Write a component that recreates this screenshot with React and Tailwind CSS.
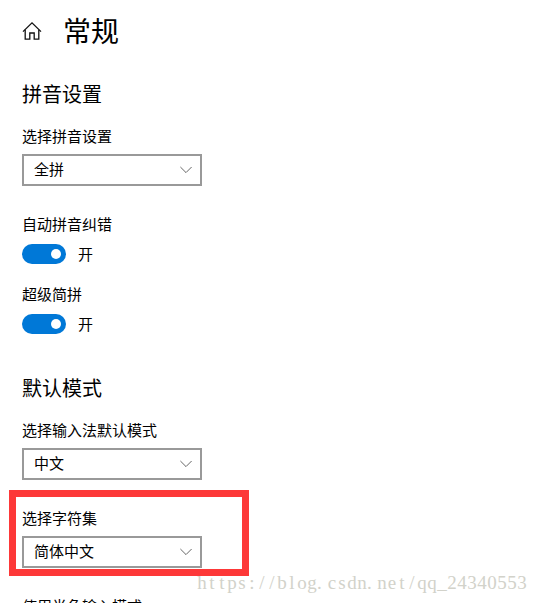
import React, { useState } from 'react'

const SelectField = ({ label, value, className }) => {
  return (
    <div className={className}>
      <div className="h-5 text-[15px] leading-5">{label}</div>
      <button className="mt-2 flex h-8 w-[180px] items-center justify-between border-2 border-[#999999] bg-white pr-2 pl-2.5 text-[15px] leading-5">
        <span className="pb-0.5">{value}</span>
        <svg width="12" height="8" viewBox="0 0 12 8" fill="none" stroke="#666666" strokeWidth="1">
          <path d="M0.4 1 L6 6.6 L11.6 1" />
        </svg>
      </button>
    </div>
  )
}

const ToggleField = ({ label, className }) => {
  const [on, setOn] = useState(true)

  return (
    <div className={className}>
      <div className="h-5 text-[15px] leading-5">{label}</div>
      <div className="mt-2.5 flex h-5 items-center gap-3">
        <button
          onClick={() => setOn(!on)}
          className={`flex h-5 w-11 items-center rounded-full px-[5px] ${on ? 'justify-end bg-[#0078d7]' : 'justify-start bg-[#999999]'}`}
        >
          <span className="h-2.5 w-2.5 rounded-full bg-white"></span>
        </button>
        <span className="text-[15px] leading-5">{on ? '开' : '关'}</span>
      </div>
    </div>
  )
}

// every character sits in a 10px cell
const Watermark = ({ text }) => {
  return (
    <div className="pointer-events-none absolute top-[572px] left-[197px] font-['Liberation_Serif',serif] text-[19px] leading-[22px] whitespace-nowrap text-[#d2d2ca]">
      {text.split('').map((char, index) => (
        <span key={index} className={`inline-block w-2.5 ${char === '.' ? 'text-left' : 'text-center'}`}>{char}</span>
      ))}
    </div>
  )
}

const App = () => {
  return (
    <div className="relative h-[603px] w-[538px] overflow-hidden bg-white pl-[22px] font-['Noto_Sans_CJK_SC',sans-serif] text-black">
      <header className="flex h-[62px] items-center gap-[21px]">
        <svg width="20" height="20" viewBox="0 0 20 20" fill="none" stroke="#111111" strokeWidth="1.3">
          <path d="M1 10.6 L10 1.8 L19 10.6" />
          <path d="M3.2 8.8 V18.2 H7.8 V12 H12.2 V18.2 H16.8 V8.8" />
        </svg>
        <h1 className="pb-0.5 text-[28px] leading-[40px]">常规</h1>
      </header>

      <section className="pt-[17px]">
        <h2 className="h-[30px] text-[20px] leading-[30px]">拼音设置</h2>
        <SelectField className="mt-[17px]" label="选择拼音设置" value="全拼" />
        <ToggleField className="mt-7" label="自动拼音纠错" />
        <ToggleField className="mt-5" label="超级简拼" />
      </section>

      <section className="pt-[39px]">
        <h2 className="h-[30px] text-[20px] leading-[30px]">默认模式</h2>
        <SelectField className="mt-[17px]" label="选择输入法默认模式" value="中文" />
        <SelectField className="mt-7" label="选择字符集" value="简体中文" />
        <div className="mt-7 h-5 text-[15px] leading-5">使用半角输入模式</div>
      </section>

      <div className="pointer-events-none absolute top-[490px] left-[9px] h-[86px] w-[240px] border-[7px] border-[#fd3838]"></div>
      <Watermark text="https://blog.csdn.net/qq_24340553" />
    </div>
  )
}

export default App
